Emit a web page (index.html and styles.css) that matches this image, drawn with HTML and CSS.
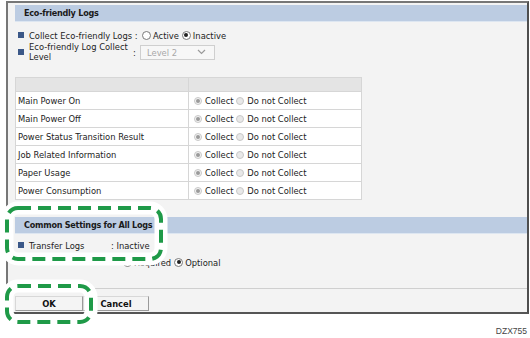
FILE: index.html
```html
<!DOCTYPE html>
<html lang="en">
<head>
    <meta charset="UTF-8">
    <meta name="viewport" content="width=device-width, initial-scale=1.0">
    <title>Eco-friendly Logs</title>
    <link rel="stylesheet" href="styles.css">
</head>
<body>
    <div class="screen">
        <div class="panel">
            <div class="section-head">Eco-friendly Logs</div>

            <div class="settings">
                <div class="setting">
                    <span class="bullet"></span>
                    <span class="label">Collect Eco-friendly Logs :</span>
                    <span class="radio"></span><span class="opt">Active</span>
                    <span class="radio on"></span><span class="opt">Inactive</span>
                </div>
                <div class="setting two-line">
                    <span class="bullet"></span>
                    <span class="label wrap">Eco-friendly Log Collect Level</span>
                    <span class="colon">:</span>
                    <span class="select">Level 2
                        <svg width="9" height="6" viewBox="0 0 9 6"><path d="M1 1l3.5 3.5L8 1" fill="none" stroke="#9a9a9a" stroke-width="1.2"/></svg>
                    </span>
                </div>
            </div>

            <table class="log-table">
                <tr class="head"><th></th><th></th></tr>
                <tr><td>Main Power On</td><td><span class="radio dis on"></span>Collect <span class="radio dis"></span>Do not Collect</td></tr>
                <tr><td>Main Power Off</td><td><span class="radio dis on"></span>Collect <span class="radio dis"></span>Do not Collect</td></tr>
                <tr><td>Power Status Transition Result</td><td><span class="radio dis on"></span>Collect <span class="radio dis"></span>Do not Collect</td></tr>
                <tr><td>Job Related Information</td><td><span class="radio dis on"></span>Collect <span class="radio dis"></span>Do not Collect</td></tr>
                <tr><td>Paper Usage</td><td><span class="radio dis on"></span>Collect <span class="radio dis"></span>Do not Collect</td></tr>
                <tr><td>Power Consumption</td><td><span class="radio dis on"></span>Collect <span class="radio dis"></span>Do not Collect</td></tr>
            </table>

            <div class="section-head common">Common Settings for All Logs</div>
            <div class="setting transfer">
                <span class="bullet"></span>
                <span class="label short">Transfer Logs</span>
                <span>: Inactive</span>
            </div>
            <div class="setting sub">
                <span class="radio"></span><span class="opt">Required</span>
                <span class="radio on"></span><span class="opt">Optional</span>
            </div>

            <div class="actions">
                <button class="btn">OK</button><button class="btn">Cancel</button>
            </div>
        </div>

        <!-- callout marks drawn over the screen -->
        <svg class="callouts" width="530" height="338" viewBox="0 0 530 338">
            <rect x="7" y="207" width="154" height="51" rx="11" fill="none" stroke="#fff" stroke-width="13"/>
            <rect x="7" y="285" width="84" height="36" rx="11" fill="none" stroke="#fff" stroke-width="13"/>
            <rect x="7" y="207" width="154" height="51" rx="11" fill="none" stroke="#1f9a48" stroke-width="4" stroke-dasharray="13 7"/>
            <rect x="7" y="285" width="84" height="36" rx="11" fill="none" stroke="#1f9a48" stroke-width="4" stroke-dasharray="13 7"/>
        </svg>

        <div class="code">DZX755</div>
    </div>
</body>
</html>
```

FILE: styles.css
```css
body {
    margin: 0;
    background-color: #fff;
    font-family: "DejaVu Sans Condensed", "DejaVu Sans", sans-serif;
    font-stretch: condensed;
    font-size: 9.3px;
    color: #222;
}

.screen {
    position: relative;
    width: 530px;
    height: 338px;
}

.panel {
    margin: 1px 0 0 6px;
    width: 519px;
    background-color: #f3f3f3;
    border: 2px solid #777;
    border-right-color: #4e4e4e;
    border-bottom-color: #555;
}

.section-head {
    margin: 2px 0 0 7px;
    height: 16px;
    line-height: 16px;
    padding-left: 9px;
    background-color: #bccce2;
    border-bottom: 1px solid #dde6f1;
    font-weight: bold;
    font-size: 9px;
    letter-spacing: -0.25px;
    color: #1a1a1a;
}

.settings {
    padding: 6px 0 0 10px;
}

.setting {
    display: flex;
    align-items: center;
    height: 14px;
}

.setting.two-line {
    height: 20px;
}

.bullet {
    width: 6px;
    height: 6px;
    background-color: #3b5888;
    margin-right: 5px;
}

.label {
    width: 113px;
    white-space: nowrap;
}

.label.wrap {
    width: 104px;
    white-space: normal;
    line-height: 10px;
}

.colon {
    width: 7px;
}

.opt {
    margin-right: 3px;
}

.radio {
    display: inline-block;
    box-sizing: border-box;
    width: 9px;
    height: 9px;
    border: 1px solid #7a7a7a;
    border-radius: 50%;
    background-color: #fff;
    margin-right: 2px;
    vertical-align: -1px;
    position: relative;
}

.radio.on::after {
    content: "";
    position: absolute;
    left: 1.5px;
    top: 1.5px;
    width: 4px;
    height: 4px;
    border-radius: 50%;
    background-color: #222;
}

.radio.dis {
    border-color: #c8c8c8;
    background-color: #e8e8e8;
    width: 8px;
    height: 8px;
}

.radio.dis.on {
    background-color: #f2f2f2;
}

.radio.dis.on::after {
    left: 1px;
    top: 1px;
    background-color: #9a9a9a;
}

.select {
    display: flex;
    align-items: center;
    justify-content: space-between;
    box-sizing: border-box;
    width: 75px;
    height: 15px;
    padding: 0 8px 0 6px;
    background-color: #f7f7f7;
    border: 1px solid #cfcfcf;
    color: #a8a8a8;
}

.log-table {
    margin: 15px 0 0 7px;
    width: 347px;
    border-collapse: collapse;
    background-color: #fff;
}

.log-table td,
.log-table th {
    border: 1px solid #d6d6d6;
    height: 17px;
    padding: 0 0 0 2px;
    white-space: nowrap;
}

.log-table td:first-child {
    width: 170px;
}

.log-table td:last-child {
    padding-left: 5px;
}

.log-table .head th {
    height: 13px;
    background-color: #e4e4e4;
}

.log-table .radio {
    margin-right: 3px;
}

.section-head.common {
    margin-top: 17px;
}

.setting.transfer {
    padding: 4px 0 0 10px;
}

.label.short {
    width: 82px;
}

.setting.sub {
    margin-top: 3px;
    padding-left: 115px;
}

.actions {
    margin-top: 19px;
    border-top: 1px solid #cfcfcf;
    padding: 7px 0 1px 7px;
    display: flex;
}

.btn {
    height: 15px;
    padding: 0;
    font-family: inherit;
    font-stretch: condensed;
    font-size: 9.3px;
    font-weight: bold;
    color: #111;
    background-color: #f4f4f4;
    border: 1px solid #9a9a9a;
    border-top-color: #d8d8d8;
    border-left-color: #d8d8d8;
}

.btn:first-child {
    width: 68px;
}

.btn:last-child {
    width: 66px;
}

.callouts {
    position: absolute;
    left: 0;
    top: 0;
    pointer-events: none;
}

.code {
    position: absolute;
    right: 3px;
    top: 325px;
    font-family: "Liberation Sans", Arial, sans-serif;
    font-stretch: normal;
    font-size: 8.5px;
    color: #444;
}
```
